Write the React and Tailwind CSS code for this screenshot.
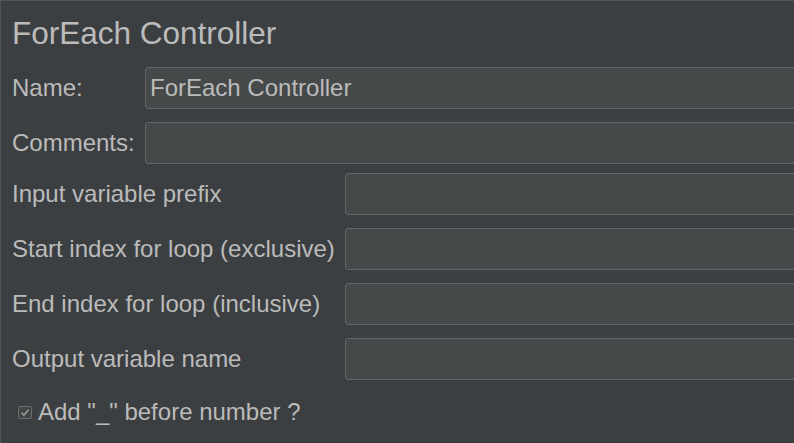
export default function App() {
  const params = [
    'Input variable prefix',
    'Start index for loop (exclusive)',
    'End index for loop (inclusive)',
    'Output variable name',
  ];

  return (
    <div className="w-[794px] h-[443px] overflow-hidden bg-[#3c3f41] border-t border-l border-[#505456] text-[#bbbbbb] font-['Liberation_Sans',Arial,sans-serif]">
      <div className="w-[820px]">
        {/* Title */}
        <div className="pl-[11px] pt-[14px] text-[31.5px] leading-[36px]">ForEach Controller</div>

        {/* Name / Comments */}
        <div className="mt-[16px] flex flex-col gap-[13px] pl-[11px]">
          <div className="flex items-center">
            <div className="w-[133px] text-[24px]">Name:</div>
            <div className="flex-1 h-[42px] flex items-center pl-[4px] bg-[#46494a] border border-[#646566] rounded-[3px] text-[24px]">
              ForEach Controller
            </div>
          </div>
          <div className="flex items-center">
            <div className="w-[133px] text-[24px]">Comments:</div>
            <div className="flex-1 h-[42px] bg-[#46494a] border border-[#646566] rounded-[3px]" />
          </div>
        </div>

        {/* Loop params */}
        <div className="mt-[9px] flex flex-col gap-[13px] pl-[11px]">
          {params.map(p => (
            <div key={p} className="flex items-center">
              <div className="w-[333px] text-[24px] whitespace-nowrap">{p}</div>
              <div className="flex-1 h-[42px] bg-[#46494a] border border-[#646566] rounded-[3px]" />
            </div>
          ))}
        </div>

        {/* Checkbox */}
        <div className="mt-[17px] h-[30px] flex items-center pl-[17px] gap-[6px]">
          <div className="w-[14px] h-[13px] border border-[#6a6c6e] rounded-[2px] bg-[#434647] flex items-center justify-center">
            <svg width="10" height="9" viewBox="0 0 10 9">
              <path d="M1.5 4.8 L4 7.2 L8.5 1.8" fill="none" stroke="#9a9a9a" strokeWidth="1.6" />
            </svg>
          </div>
          <span className="text-[24px]">Add "_" before number ?</span>
        </div>
      </div>
    </div>
  );
}
